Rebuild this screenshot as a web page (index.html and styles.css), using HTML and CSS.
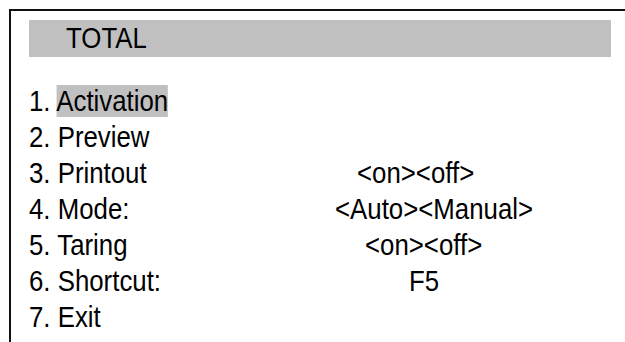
FILE: index.html
```html
<!DOCTYPE html>
<html>
<head>
<meta charset="utf-8">
<link rel="stylesheet" href="styles.css">
</head>
<body>
<div class="frame">
  <div class="bar"><span class="t">TOTAL</span></div>
  <div class="list">
    <div class="row"><span class="t">1. <span class="sel">Activation</span></span></div>
    <div class="row"><span class="t">2. Preview</span></div>
    <div class="row"><span class="t">3. Printout</span><span class="t val v1">&lt;on&gt;&lt;off&gt;</span></div>
    <div class="row"><span class="t">4. Mode:</span><span class="t val v2">&lt;Auto&gt;&lt;Manual&gt;</span></div>
    <div class="row"><span class="t">5. Taring</span><span class="t val v3">&lt;on&gt;&lt;off&gt;</span></div>
    <div class="row"><span class="t">6. Shortcut:</span><span class="t val v4">F5</span></div>
    <div class="row"><span class="t">7. Exit</span></div>
  </div>
</div>
</body>
</html>
```

FILE: styles.css
```css
html, body {
  margin: 0;
  padding: 0;
  background: #ffffff;
  overflow: hidden;
}

body {
  font-family: "Liberation Sans", Arial, sans-serif;
  font-size: 29px;
  color: #000;
}

.frame {
  margin: 9px 0 0 9px;
  height: 333px;
  box-sizing: border-box;
  border-left: 2px solid #111;
  border-top: 2px solid #111;
  padding: 9px 0 0 18px;
}

.bar {
  width: 582px;
  height: 37px;
  line-height: 37px;
  background: #c0c0c0;
  padding-left: 37px;
  box-sizing: border-box;
}

.t {
  display: inline-block;
  transform: scaleX(0.89);
  transform-origin: left center;
  white-space: pre;
}

.list {
  margin-top: 26px;
}

.row {
  display: grid;
  grid-template-columns: 306px auto;
  height: 36px;
  line-height: 36px;
}

.sel {
  background: #c0c0c0;
}

.v1 { margin-left: 22px; }
.v2 { margin-left: 0; }
.v3 { margin-left: 30px; }
.v4 { margin-left: 74px; }
```
